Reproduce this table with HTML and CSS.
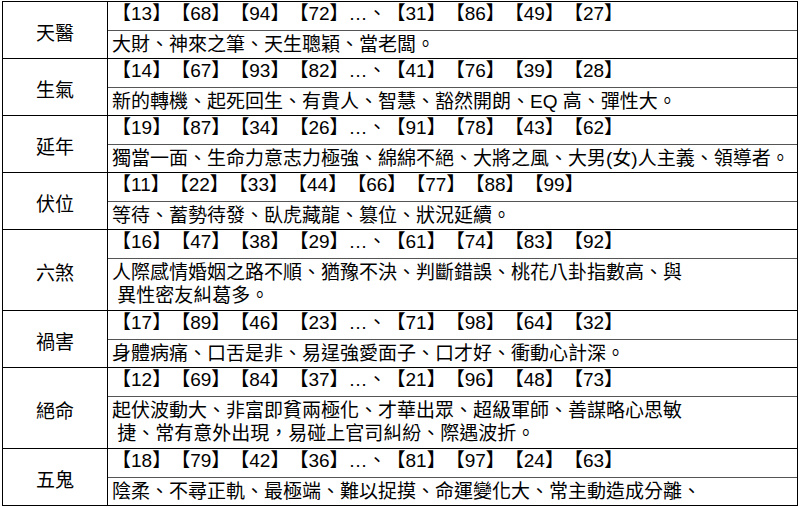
FILE: index.html
```html
<!DOCTYPE html>
<html lang="zh-Hant">
<head>
<meta charset="utf-8">
<title>八星數字組合</title>
<link rel="stylesheet" href="styles.css">
</head>
<body>
<div class="table">
  <div class="group">
    <div class="label">天醫</div>
    <div class="cells">
      <div class="nums">【13】【68】【94】【72】…、【31】【86】【49】【27】</div>
      <div class="desc">大財、神來之筆、天生聰穎、當老闆。</div>
    </div>
  </div>
  <div class="group">
    <div class="label">生氣</div>
    <div class="cells">
      <div class="nums">【14】【67】【93】【82】…、【41】【76】【39】【28】</div>
      <div class="desc">新的轉機、起死回生、有貴人、智慧、豁然開朗、EQ 高、彈性大。</div>
    </div>
  </div>
  <div class="group">
    <div class="label">延年</div>
    <div class="cells">
      <div class="nums">【19】【87】【34】【26】…、【91】【78】【43】【62】</div>
      <div class="desc">獨當一面、生命力意志力極強、綿綿不絕、大將之風、大男(女)人主義、領導者。</div>
    </div>
  </div>
  <div class="group">
    <div class="label">伏位</div>
    <div class="cells">
      <div class="nums">【11】【22】【33】【44】【66】【77】【88】【99】</div>
      <div class="desc">等待、蓄勢待發、臥虎藏龍、篡位、狀況延續。</div>
    </div>
  </div>
  <div class="group">
    <div class="label">六煞</div>
    <div class="cells">
      <div class="nums">【16】【47】【38】【29】…、【61】【74】【83】【92】</div>
      <div class="desc double">人際感情婚姻之路不順、猶豫不決、判斷錯誤、桃花八卦指數高、與<br>&nbsp;異性密友糾葛多。</div>
    </div>
  </div>
  <div class="group">
    <div class="label">禍害</div>
    <div class="cells">
      <div class="nums">【17】【89】【46】【23】…、【71】【98】【64】【32】</div>
      <div class="desc">身體病痛、口舌是非、易逞強愛面子、口才好、衝動心計深。</div>
    </div>
  </div>
  <div class="group">
    <div class="label">絕命</div>
    <div class="cells">
      <div class="nums">【12】【69】【84】【37】…、【21】【96】【48】【73】</div>
      <div class="desc double">起伏波動大、非富即貧兩極化、才華出眾、超級軍師、善謀略心思敏<br>&nbsp;捷、常有意外出現，易碰上官司糾紛、際遇波折。</div>
    </div>
  </div>
  <div class="group">
    <div class="label">五鬼</div>
    <div class="cells">
      <div class="nums">【18】【79】【42】【36】…、【81】【97】【24】【63】</div>
      <div class="desc">陰柔、不尋正軌、最極端、難以捉摸、命運變化大、常主動造成分離、</div>
    </div>
  </div>
</div>
</body>
</html>
```

FILE: styles.css
```css
html, body {
  margin: 0;
  padding: 0;
  background: #ffffff;
}

body {
  padding: 1px 0 0 2px;
  font-family: "Liberation Sans", "Noto Sans CJK TC", sans-serif;
  font-size: 19px;
  color: #000000;
  text-spacing-trim: space-all;
}

.table {
  box-sizing: border-box;
  width: 796px;
  border: 1px solid #000000;
}

.group {
  display: flex;
  border-top: 1px solid #000000;
}

.group:first-child {
  border-top: none;
}

.label {
  box-sizing: border-box;
  flex: 0 0 105px;
  border-right: 1px solid #000000;
  display: flex;
  align-items: center;
  justify-content: center;
  padding-top: 8px;
  line-height: 24px;
}

.cells {
  flex: 1 1 auto;
  display: flex;
  flex-direction: column;
}

.nums {
  height: 28px;
  box-sizing: content-box;
  border-bottom: 1px solid #555555;
  padding-left: 4px;
  line-height: 24px;
  white-space: nowrap;
}

.desc {
  height: 27px;
  padding-left: 4px;
  padding-top: 2px;
  box-sizing: border-box;
  line-height: 24px;
  white-space: nowrap;
}

.desc.double {
  height: 51px;
  line-height: 23px;
}
```
